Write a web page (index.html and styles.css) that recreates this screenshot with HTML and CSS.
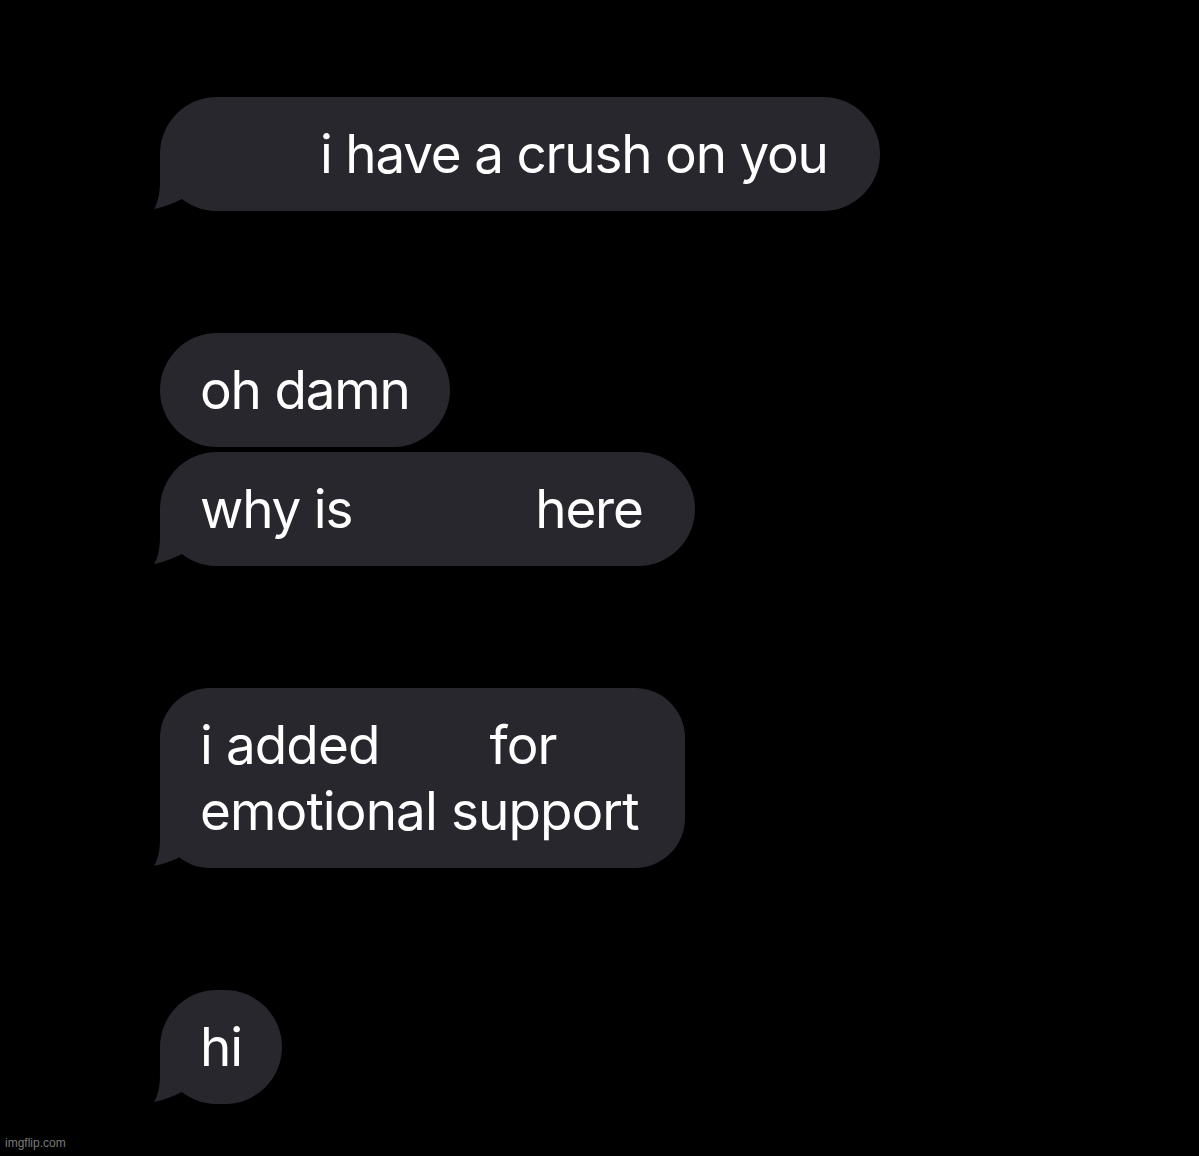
FILE: index.html
```html
<!DOCTYPE html>
<html lang="en">
<head>
  <meta charset="UTF-8" />
  <meta name="viewport" content="width=device-width, initial-scale=1.0"/>
  <title>Messages</title>
  <link rel="stylesheet" href="styles.css">
</head>
<body>
  <div class="chat">

    <div class="bubble first tail">
      <svg class="tail-svg" viewBox="0 0 70 60" width="70" height="60"><path d="M8 0 L8 30 C8 45 5 53 2 58 C12 56 22 52 30 48 C38 54 48 58 65 60 L65 0 Z"/></svg>
      <span class="blank name"></span>i have a crush on you
    </div>

    <div class="group">
      <div class="bubble">oh damn</div>
      <div class="bubble second tail">
        <svg class="tail-svg" viewBox="0 0 70 60" width="70" height="60"><path d="M8 0 L8 30 C8 45 5 53 2 58 C12 56 22 52 30 48 C38 54 48 58 65 60 L65 0 Z"/></svg>
        why is<span class="blank gap1"></span>here
      </div>
    </div>

    <div class="bubble multi tail">
      <svg class="tail-svg" viewBox="0 0 70 60" width="70" height="60"><path d="M8 0 L8 30 C8 45 5 53 2 58 C12 56 22 52 30 48 C38 54 48 58 65 60 L65 0 Z"/></svg>
      i added<span class="blank gap2"></span>for<br>
      emotional support
    </div>

    <div class="bubble tail">
      <svg class="tail-svg" viewBox="0 0 70 60" width="70" height="60"><path d="M8 0 L8 30 C8 45 5 53 2 58 C12 56 22 52 30 48 C38 54 48 58 65 60 L65 0 Z"/></svg>
      hi
    </div>

  </div>

  <div class="watermark">imgflip.com</div>
</body>
</html>
```

FILE: styles.css
```css
body {
  margin: 0;
  background-color: #000;
  font-family: Inter, "Noto Sans", sans-serif;
  height: 1156px;
  overflow: hidden;
  position: relative;
}

.chat {
  display: flex;
  flex-direction: column;
  align-items: flex-start;
  gap: 122px;
  padding-top: 97px;
  padding-left: 160px;
}

.group {
  display: flex;
  flex-direction: column;
  align-items: flex-start;
  gap: 5px;
}

.bubble {
  position: relative;
  z-index: 0;
  background-color: #27272d;
  color: #fff;
  font-size: 53px;
  letter-spacing: -1.2px;
  line-height: 66px;
  padding: 24px 40px;
  border-radius: 57px;
  white-space: nowrap;
}

.bubble.first {
  padding-right: 52px;
}

.bubble.second {
  padding-right: 52px;
}

.bubble.multi {
  padding-right: 46px;
  border-radius: 50px;
  letter-spacing: -0.9px;
}

.blank {
  display: inline-block;
}

.blank.name {
  width: 120px;
}

.blank.gap1 {
  width: 183px;
}

.blank.gap2 {
  width: 110px;
}

.tail-svg {
  position: absolute;
  z-index: -1;
  left: -8px;
  bottom: 0;
  fill: #27272d;
}

.watermark {
  position: absolute;
  left: 5px;
  bottom: 6px;
  font-family: "Liberation Sans", Arial, sans-serif;
  font-size: 12px;
  color: #7a7a7a;
}
```
